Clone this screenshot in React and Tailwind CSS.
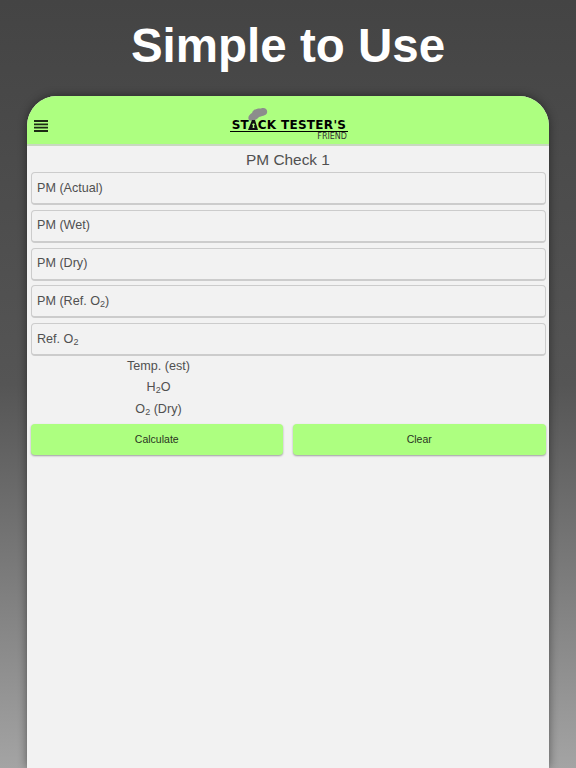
const FONT = "font-['Liberation_Sans',sans-serif]";

const Field = ({ children }) => (
  <div className="h-[33px] flex items-center px-[5.5px] rounded-[4px] border border-[#cccccc] border-b-2 text-[12.6px] text-[#505050] bg-[#f2f2f2]">
    <span>{children}</span>
  </div>
);

const Sub = ({ children }) => <sub className="text-[9px]">{children}</sub>;

const Logo = () => (
  <div className="relative w-[118px] h-[36px]">
    <svg className="absolute left-[17px] top-0" width="22" height="28" viewBox="0 0 22 28">
      <path d="M2 13 C0 10 3 7 5 6 C6 2 11 1 14 1.5 C18 0 21 3 20 6 C19 9 14 9 12 10 C10 13 4 15 2 13Z" fill="#8c8c8c" />
      <path fillRule="evenodd" d="M5 13 L8 13 L11 23 L1 23 Z M6.5 16.5 a1 1 0 0 0 -.5 2 L5.5 21 L7.5 21 L7 18.5 a1 1 0 0 0 -.5 -2 Z" fill="#111" />
    </svg>
    <div className="absolute left-0 top-[12px] w-full text-center whitespace-nowrap font-['DejaVu_Sans',sans-serif] font-bold text-[12px] tracking-[0.3px] leading-[12px] text-black border-b-[1.5px] border-black">
      ST<span className="opacity-0">A</span>CK TESTER'S
    </div>
    <div className="absolute right-[1px] top-[25px] font-['DejaVu_Sans',sans-serif] text-[8px] leading-[9px] text-[#333]">FRIEND</div>
  </div>
);

export default function App() {
  return (
    <div className={`w-full h-[768px] overflow-hidden flex flex-col items-center bg-gradient-to-b from-[#444444] via-[#555555] to-[#a4a4a4] ${FONT}`}>
      <h1 className="h-[96px] shrink-0 pt-[14px] text-[47.5px] leading-[63px] font-bold text-white">
        Simple to Use
      </h1>
      <div className="w-[522px] grow shrink-0 rounded-t-[30px] overflow-hidden bg-[#f2f2f2] shadow-[0_0_10px_rgba(0,0,0,0.45)] flex flex-col">
        <header className="h-[50px] shrink-0 bg-[#adff80] border-b-2 border-[#c9d9c0] flex items-center relative">
          <svg className="ml-[7px] mt-[11px]" width="14" height="12" viewBox="0 0 14 12">
            <path d="M0 1h14M0 4.3h14M0 7.6h14M0 11h14" stroke="#1c2a14" strokeWidth="1.8" />
          </svg>
          <div className="absolute left-[203px] top-[11px]"><Logo /></div>
        </header>
        <main className="flex flex-col px-[3.5px]">
          <div className="text-center text-[15.4px] leading-[22px] text-[#505050] mt-[2.5px]">PM Check 1</div>
          <div className="flex flex-col gap-[4.75px] mt-[1.5px]">
            <Field>PM (Actual)</Field>
            <Field>PM (Wet)</Field>
            <Field>PM (Dry)</Field>
            <Field>PM (Ref. O<Sub>2</Sub>)</Field>
            <Field>Ref. O<Sub>2</Sub></Field>
          </div>
          <div className="w-[256px] text-center text-[12.6px] text-[#505050]">
            <div className="h-[21px] leading-[21px]">Temp. (est)</div>
            <div className="h-[21px] leading-[21px]">H<Sub>2</Sub>O</div>
            <div className="h-[22px] leading-[22px]">O<Sub>2</Sub> (Dry)</div>
          </div>
          <div className="flex gap-[10px] mt-[4px]">
            <button className="flex-1 h-[31px] rounded-[4px] bg-[#adff80] shadow-[0_1px_2px_rgba(0,0,0,0.35)] text-[10.5px] text-[#2a3522]">Calculate</button>
            <button className="flex-1 h-[31px] rounded-[4px] bg-[#adff80] shadow-[0_1px_2px_rgba(0,0,0,0.35)] text-[10.5px] text-[#2a3522]">Clear</button>
          </div>
        </main>
      </div>
    </div>
  );
}
